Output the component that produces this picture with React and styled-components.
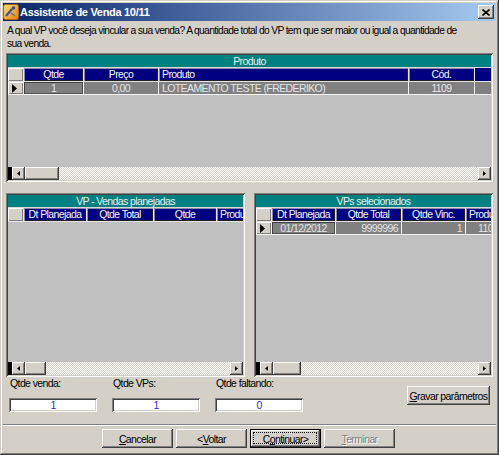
import React from 'react';
import styled, { createGlobalStyle, css } from 'styled-components';

const FONT = `"Liberation Sans", Arial, sans-serif`;

const GlobalStyle = createGlobalStyle`
  html, body { margin: 0; padding: 0; }
  body {
    background: #D4D0C8;
    font-family: ${FONT};
    font-size: 10.5px;
    letter-spacing: -0.6px;
    color: #000;
  }
  * { box-sizing: border-box; }
`;

const raised = css`
  box-shadow: inset -1px -1px #404040, inset 1px 1px #fff, inset -2px -2px #808080, inset 2px 2px #D4D0C8;
`;
const sunken = css`
  box-shadow: inset 1px 1px #808080, inset -1px -1px #fff, inset 2px 2px #404040, inset -2px -2px #D4D0C8;
`;

const Window = styled.div`
  width: 499px;
  height: 455px;
  background: #D4D0C8;
  padding: 3px;
  display: flex;
  flex-direction: column;
  box-shadow: inset -1px -1px #404040, inset 1px 1px #D4D0C8, inset -2px -2px #808080, inset 2px 2px #fff;
`;

const TitleBar = styled.div`
  height: 18px;
  flex: none;
  display: flex;
  align-items: center;
  padding: 0 2px 0 0;
  background: linear-gradient(to right, #0A246A, #A6CAF0);
`;

const TitleText = styled.span`
  margin-left: 1px;
  color: #fff;
  font-weight: bold;
  font-size: 11px;
  letter-spacing: -0.3px;
  flex: 1;
`;

const CloseButton = styled.div`
  width: 16px;
  height: 14px;
  background: #D4D0C8;
  ${raised};
  display: flex;
  align-items: center;
  justify-content: center;
`;

const Body = styled.div`
  flex: 1;
  display: flex;
  flex-direction: column;
  padding: 0 3px;
  min-height: 0;
`;

const Intro = styled.div`
  margin: 3px 0 3px 1px;
  line-height: 13px;
  height: 26px;
  white-space: nowrap;
  font-size: 10.3px;
  letter-spacing: -0.66px;
`;

const GridBox = styled.div`
  width: ${p => p.$w}px;
  height: ${p => p.$h}px;
  flex: none;
  padding: 2px;
  background: #C0C0C0;
  ${sunken};
  display: flex;
  flex-direction: column;
`;

const GridInner = styled.div`
  flex: 1;
  display: flex;
  flex-direction: column;
  overflow: hidden;
  min-height: 0;
`;

const Caption = styled.div`
  height: 13px;
  flex: none;
  background: #008080;
  color: #EDEDED;
  text-align: center;
  line-height: 12px;
  border-bottom: 1px solid #D8D8D8;
  white-space: nowrap;
`;

const Row = styled.div`
  display: flex;
  flex: none;
  height: ${p => p.$h}px;
  border-bottom: 1px solid ${p => p.$line};
  background: ${p => p.$line};
  white-space: nowrap;
`;

const Cell = styled.div`
  flex: none;
  width: ${p => p.$w - 1}px;
  margin-right: 1px;
  overflow: hidden;
  padding: 0 3px;
  line-height: 13px;
  text-align: ${p => p.$align || 'center'};
`;

const HeadCell = styled(Cell)`
  background: #000080;
  color: #F4F4F4;
  box-shadow: inset 1px 1px #8A8AA8, inset -1px -1px #202020;
  line-height: 13px;
`;

const IndicatorCell = styled(Cell)`
  background: #D4D0C8;
  padding: 0;
  box-shadow: inset 1px 1px #fff, inset -1px -1px #808080;
  display: flex;
  align-items: center;
  padding-left: 4px;
`;

const DataCell = styled(Cell)`
  background: #808080;
  color: #E6E6E6;
  line-height: 12px;
  padding-left: ${p => p.$indent || 3}px;
  ${p => p.$focus && css`box-shadow: inset 1px 1px #404040, inset -1px -1px #505050;`}
`;

const FillCell = styled.div`
  flex: 1;
  display: flex;
  overflow: hidden;
  background: ${p => p.$bg};
`;

const ScrollBar = styled.div`
  margin-top: auto;
  height: 13px;
  flex: none;
  display: flex;
`;

const ScrollBlack = styled.div`
  width: 4px;
  background: #000;
`;

const ScrollBtn = styled.div`
  width: 13px;
  flex: none;
  background: #D4D0C8;
  ${raised};
  display: flex;
  align-items: center;
  justify-content: center;
`;

const ScrollThumb = styled.div`
  width: ${p => p.$w}px;
  flex: none;
  background: #D4D0C8;
  ${raised};
`;

const ScrollTrack = styled.div`
  flex: 1;
  background: repeating-conic-gradient(#D4D0C8 0 25%, #fff 0 50%) 0 0 / 2px 2px;
`;

const GridsRow = styled.div`
  display: flex;
  gap: 9px;
  margin-top: 11px;
`;

const FieldsRow = styled.div`
  display: flex;
  align-items: flex-start;
  gap: 15px;
  padding-left: 3px;
  height: 35px;
  flex: none;
`;

const Field = styled.div`
  width: 88px;
  display: flex;
  flex-direction: column;
`;

const Label = styled.div`
  height: 13px;
  line-height: 13px;
  padding-left: 1px;
  margin-bottom: 8px;
  white-space: nowrap;
`;

const Input = styled.div`
  height: 14px;
  background: #fff;
  ${sunken};
  color: #2B2BC8;
  text-align: center;
  line-height: 14px;
`;

const Button = styled.div`
  position: relative;
  width: ${p => p.$w}px;
  height: 19px;
  flex: none;
  background: #D4D0C8;
  ${raised};
  display: flex;
  align-items: center;
  justify-content: center;
  white-space: nowrap;
  ${p => p.$disabled && css`color: #808080; text-shadow: 1px 1px #fff;`}
  ${p => p.$focus && css`
    box-shadow: inset 0 0 0 1px #000, inset -2px -2px #404040, inset 2px 2px #fff, inset -3px -3px #808080;
    &::after {
      content: '';
      position: absolute;
      inset: 3px 4px 4px 3px;
      border: 1px dotted #000;
    }
  `}
`;

const GravarButton = styled(Button)`
  margin-left: auto;
  margin-top: 9px;
  margin-right: 3px;
`;

const Separator = styled.div`
  height: 2px;
  flex: none;
  margin: 12px -3px 0;
  border-top: 1px solid #808080;
  border-bottom: 1px solid #fff;
`;

const ButtonsRow = styled.div`
  display: flex;
  gap: 3px;
  margin-top: 3px;
  padding-left: 96px;
`;

const U = styled.span`
  text-decoration: underline;
`;

const RowTriangle = () => (
  <svg width="5" height="9" viewBox="0 0 5 9"><polygon points="0,0 5,4.5 0,9" fill="#000" /></svg>
);

const ArrowLeft = () => (
  <svg width="3" height="5" viewBox="0 0 3 5"><polygon points="3,0 0,2.5 3,5" fill="#000" /></svg>
);
const ArrowRight = () => (
  <svg width="3" height="5" viewBox="0 0 3 5"><polygon points="0,0 3,2.5 0,5" fill="#000" /></svg>
);

const Scroll = ({ thumb }) => (
  <ScrollBar>
    <ScrollBlack />
    <ScrollBtn><ArrowLeft /></ScrollBtn>
    <ScrollThumb $w={thumb} />
    <ScrollTrack />
    <ScrollBtn><ArrowRight /></ScrollBtn>
  </ScrollBar>
);

const AppIcon = () => (
  <svg width="16" height="16" viewBox="0 0 16 16">
    <defs>
      <linearGradient id="ig" x1="0" y1="0" x2="1" y2="1">
        <stop offset="0" stopColor="#FFE070" />
        <stop offset="1" stopColor="#E08010" />
      </linearGradient>
    </defs>
    <rect x="0.5" y="0.5" width="15" height="15" rx="2" fill="url(#ig)" stroke="#B06010" />
    <path d="M3 12 L9 5" stroke="#3050A0" strokeWidth="2" />
    <circle cx="10.5" cy="4" r="1.8" fill="#3050A0" />
    <path d="M8 9 L12 12" stroke="#5070B0" strokeWidth="1.5" />
  </svg>
);

const CloseX = () => (
  <svg width="8" height="7" viewBox="0 0 8 7">
    <path d="M0.5 0.5 L7.5 6.5 M7.5 0.5 L0.5 6.5" stroke="#000" strokeWidth="1.6" />
  </svg>
);

export default function App() {
  return (
    <>
      <GlobalStyle />
      <Window>
        <TitleBar>
          <AppIcon />
          <TitleText>Assistente de Venda 10/11</TitleText>
          <CloseButton><CloseX /></CloseButton>
        </TitleBar>
        <Body>
          <Intro>
            A qual VP você deseja vincular a sua venda? A quantidade total do VP tem que ser maior ou igual a quantidade de
            <br />
            sua venda.
          </Intro>

          <GridBox $w={487} $h={129}>
            <GridInner>
              <Caption>Produto</Caption>
              <Row $h={14} $line="#E4E4E4">
                <IndicatorCell $w={16} />
                <HeadCell $w={60}>Qtde</HeadCell>
                <HeadCell $w={75}>Preço</HeadCell>
                <HeadCell $w={250} $align="left">Produto</HeadCell>
                <HeadCell $w={66}>Cód.</HeadCell>
                <FillCell $bg="#000080" />
              </Row>
              <Row $h={13} $line="#F4F4F4">
                <IndicatorCell $w={16}><RowTriangle /></IndicatorCell>
                <DataCell $w={60} $focus>1</DataCell>
                <DataCell $w={75}>0,00</DataCell>
                <DataCell $w={250} $align="left">LOTEAMENTO TESTE (FREDERIKO)</DataCell>
                <DataCell $w={66}>1109</DataCell>
                <FillCell $bg="#808080" />
              </Row>
              <Scroll thumb={34} />
            </GridInner>
          </GridBox>

          <GridsRow>
            <GridBox $w={239} $h={184}>
              <GridInner>
                <Caption>VP - Vendas planejadas</Caption>
                <Row $h={14} $line="#E4E4E4">
                  <IndicatorCell $w={16} />
                  <HeadCell $w={63}>Dt Planejada</HeadCell>
                  <HeadCell $w={67}>Qtde Total</HeadCell>
                  <HeadCell $w={63}>Qtde</HeadCell>
                  <FillCell $bg="#000080"><HeadCell $w={60} $align="left">Produto</HeadCell></FillCell>
                </Row>
                <Scroll thumb={21} />
              </GridInner>
            </GridBox>
            <GridBox $w={239} $h={184}>
              <GridInner>
                <Caption>VPs selecionados</Caption>
                <Row $h={14} $line="#E4E4E4">
                  <IndicatorCell $w={16} />
                  <HeadCell $w={64}>Dt Planejada</HeadCell>
                  <HeadCell $w={66}>Qtde Total</HeadCell>
                  <HeadCell $w={64}>Qtde Vinc.</HeadCell>
                  <FillCell $bg="#000080"><HeadCell $w={60} $align="left">Produto</HeadCell></FillCell>
                </Row>
                <Row $h={13} $line="#F4F4F4">
                  <IndicatorCell $w={16}><RowTriangle /></IndicatorCell>
                  <DataCell $w={64} $focus>01/12/2012</DataCell>
                  <DataCell $w={66} $align="right">9999996</DataCell>
                  <DataCell $w={64} $align="right">1</DataCell>
                  <FillCell $bg="#808080"><DataCell $w={60} $align="left" $indent={12}>1109</DataCell></FillCell>
                </Row>
                <Scroll thumb={28} />
              </GridInner>
            </GridBox>
          </GridsRow>

          <FieldsRow>
            <Field>
              <Label>Qtde venda:</Label>
              <Input>1</Input>
            </Field>
            <Field>
              <Label>Qtde VPs:</Label>
              <Input>1</Input>
            </Field>
            <Field>
              <Label>Qtde faltando:</Label>
              <Input>0</Input>
            </Field>
            <GravarButton $w={83}><span><U>G</U>ravar parâmetros</span></GravarButton>
          </FieldsRow>

          <Separator />

          <ButtonsRow>
            <Button $w={71}><span><U>C</U>ancelar</span></Button>
            <Button $w={71}><span>&lt;<U>V</U>oltar</span></Button>
            <Button $w={71} $focus><span>C<U>o</U>ntinuar&gt;</span></Button>
            <Button $w={71} $disabled><span><U>T</U>erminar</span></Button>
          </ButtonsRow>
        </Body>
      </Window>
    </>
  );
}
